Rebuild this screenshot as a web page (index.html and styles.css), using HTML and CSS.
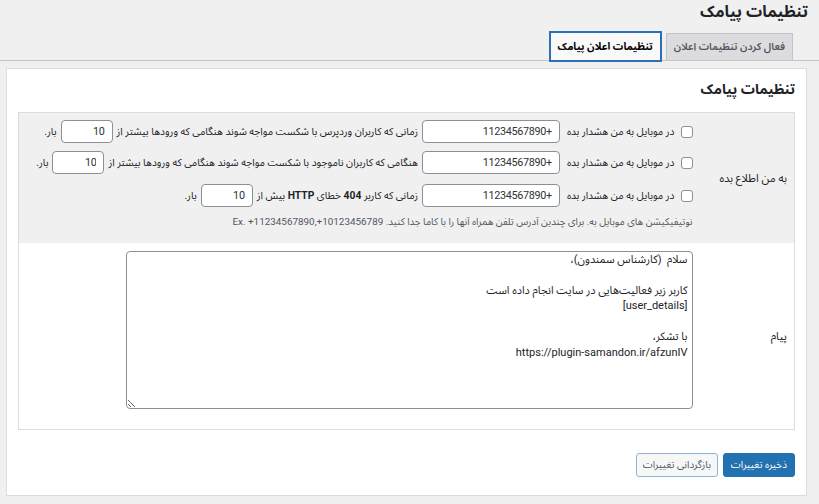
FILE: index.html
```html
<!DOCTYPE html>
<html lang="fa" dir="rtl">
<head>
<meta charset="utf-8">
<title>تنظیمات پیامک</title>
<link rel="stylesheet" href="styles.css">
</head>
<body>
<div class="wrap">
  <h1 class="page-title">تنظیمات پیامک</h1>
  <nav class="tabs">
    <a class="tab">فعال کردن تنظیمات اعلان</a>
    <a class="tab tab-active">تنظیمات اعلان پیامک</a>
  </nav>
  <div class="card">
    <h2 class="card-title">تنظیمات پیامک</h2>
    <table class="form-table">
      <tr class="row-gray">
        <th>به من اطلاع بده</th>
        <td>
          <div class="opt">
            <span class="check"></span>
            <span class="lbl">در موبایل به من هشدار بده</span>
            <input class="inp-phone" type="text" value="+11234567890">
            <span class="txt">زمانی که کاربران وردپرس با شکست مواجه شوند هنگامی که ورودها بیشتر از</span>
            <input class="inp-num" type="text" value="10">
            <span class="txt">بار.</span>
          </div>
          <div class="opt">
            <span class="check"></span>
            <span class="lbl">در موبایل به من هشدار بده</span>
            <input class="inp-phone" type="text" value="+11234567890">
            <span class="txt">هنگامی که کاربران ناموجود با شکست مواجه شوند هنگامی که ورودها بیشتر از</span>
            <input class="inp-num" type="text" value="10">
            <span class="txt">بار.</span>
          </div>
          <div class="opt">
            <span class="check"></span>
            <span class="lbl">در موبایل به من هشدار بده</span>
            <input class="inp-phone" type="text" value="+11234567890">
            <span class="txt">زمانی که کاربر <b>404</b> خطای <b>HTTP</b> بیش از</span>
            <input class="inp-num" type="text" value="10">
            <span class="txt">بار.</span>
          </div>
          <p class="desc">نوتیفیکیشن های موبایل به. برای چندین آدرس تلفن همراه آنها را با کاما جدا کنید. Ex. +11234567890,+10123456789</p>
        </td>
      </tr>
      <tr class="row-white">
        <th>پیام</th>
        <td>
          <textarea class="msg">سلام  (کارشناس سمندون)،

کاربر زیر فعالیت‌هایی در سایت انجام داده است
[user_details]

با تشکر،
https://plugin-samandon.ir/afzunIV</textarea>
        </td>
      </tr>
    </table>
    <div class="actions">
      <button class="btn btn-primary">ذخیره تغییرات</button>
      <button class="btn btn-secondary">بازگردانی تغییرات</button>
    </div>
  </div>
</div>
</body>
</html>
```

FILE: styles.css
```css
html, body {
  margin: 0;
  padding: 0;
  background: #f0f0f0;
}
body {
  font-family: Roboto, "Noto Sans Arabic", sans-serif;
  color: #1d2327;
  font-size: 10.3px;
}
.wrap {
  padding: 0 12px 0 6px;
}
.page-title {
  margin: 0;
  height: 32px;
  line-height: 24px;
  font-size: 16px;
  font-weight: bold;
  color: #1d2327;
  margin-right: -1px;
}
.tabs {
  display: flex;
  align-items: flex-end;
  gap: 4px;
  padding: 0 26px 0 0;
  border-bottom: 1px solid #c3c4c7;
  margin: 0 -12px 0 -6px;
  height: 28px;
}
.tab {
  display: block;
  box-sizing: border-box;
  height: 27px;
  line-height: 26px;
  padding: 0 7px;
  font-size: 10.3px;
  font-weight: 600;
  color: #50575e;
  background: #dcdcde;
  border: 1px solid #c3c4c7;
  border-bottom: none;
}
.tab-active {
  height: 31px;
  margin-bottom: -2px;
  line-height: 27px;
  background: #f9f9f9;
  color: #000;
  font-weight: bold;
  border: 2px solid #2c6fb5;
  padding: 0 7px;
}
.card {
  margin-top: 7px;
  background: #fff;
  border: 1px solid #dcdcde;
  padding: 0 11px 18px 11px;
}
.card-title {
  margin: 0;
  padding: 9px 0 0;
  height: 43px;
  box-sizing: border-box;
  font-size: 14px;
  font-weight: bold;
  line-height: 22px;
  color: #1d2327;
}
.form-table {
  width: 100%;
  table-layout: fixed;
  border-collapse: collapse;
  border: 1px solid #dcdcde;
}
.form-table th {
  width: 95px;
  box-sizing: border-box;
  padding: 0 7px 0 0;
  text-align: right;
  font-weight: normal;
  font-size: 11.3px;
  color: #1d2327;
  vertical-align: middle;
}
.row-gray {
  background: #f0f0f1;
}
.row-gray td {
  height: 130px;
  box-sizing: border-box;
  padding: 7px 7px 0 0;
  vertical-align: top;
}
.row-white td {
  padding: 8px 7px 20px 0;
}
.opt {
  display: flex;
  align-items: center;
  gap: 4px;
  height: 23px;
  margin-bottom: 8px;
  white-space: nowrap;
}
.opt:nth-child(2) {
  margin-bottom: 10px;
}
.check {
  box-sizing: border-box;
  width: 12px;
  height: 12px;
  border: 1px solid #8c8f94;
  border-radius: 3px;
  background: #fff;
  margin-left: 2px;
}
.lbl {
  margin-left: 3px;
}
.inp-phone, .inp-num {
  box-sizing: border-box;
  height: 23px;
  border: 1px solid #8c8f94;
  border-radius: 4px;
  background: #fff;
  font-family: Roboto, "Noto Sans Arabic", sans-serif;
  font-size: 10.8px;
  letter-spacing: -0.3px;
  color: #2c3338;
  padding: 0 7px;
  direction: rtl;
  text-align: right;
  margin: 0;
}
.inp-phone {
  width: 138px;
}
.inp-num {
  width: 52px;
}
.txt b {
  font-weight: bold;
}
.desc {
  margin: 0;
  font-size: 9.9px;
  line-height: 13px;
  color: #50575e;
}
.msg {
  display: block;
  box-sizing: border-box;
  width: 567px;
  height: 158px;
  border: 1px solid #8c8f94;
  border-radius: 4px;
  padding: 0 4px;
  font-family: Roboto, "Noto Sans Arabic", sans-serif;
  font-size: 11px;
  line-height: 15.5px;
  color: #1d2327;
  direction: rtl;
  resize: both;
}
.actions {
  display: flex;
  gap: 5px;
  margin-top: 23px;
}
.btn {
  box-sizing: border-box;
  height: 24px;
  font-family: Roboto, "Noto Sans Arabic", sans-serif;
  font-size: 10px;
  border-radius: 3px;
  cursor: pointer;
}
.btn-primary {
  padding: 0 7px;
  background: #2271b1;
  border: 1px solid #2271b1;
  color: #fff;
}
.btn-secondary {
  padding: 0 6px;
  background: #f6f7f7;
  border: 1px solid #8fb4d9;
  color: #50575e;
}
```
